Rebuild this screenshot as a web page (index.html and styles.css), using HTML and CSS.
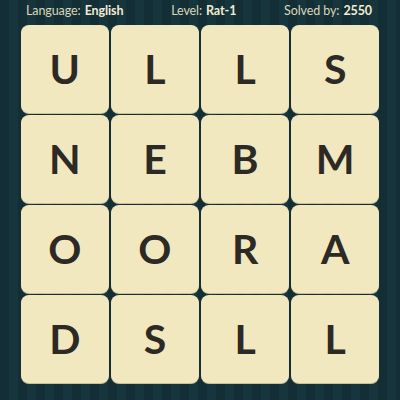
FILE: index.html
```html
<!DOCTYPE html>
<html>
<head>
<meta charset="utf-8">
<link rel="stylesheet" href="styles.css">
</head>
<body>
<div class="page">
  <div class="header">
    <span class="info">Language: <b>English</b></span>
    <span class="info">Level: <b>Rat-1</b></span>
    <span class="info">Solved by: <b>2550</b></span>
  </div>
  <div class="board">
    <div class="tile">U</div><div class="tile">L</div><div class="tile">L</div><div class="tile">S</div>
    <div class="tile">N</div><div class="tile">E</div><div class="tile">B</div><div class="tile">M</div>
    <div class="tile">O</div><div class="tile">O</div><div class="tile">R</div><div class="tile">A</div>
    <div class="tile">D</div><div class="tile">S</div><div class="tile">L</div><div class="tile">L</div>
  </div>
</div>
</body>
</html>
```
FILE: styles.css
```css
html, body {
  margin: 0;
  padding: 0;
}
body {
  width: 400px;
  height: 400px;
  overflow: hidden;
  background-color: #153139;
  background-image: repeating-linear-gradient(90deg, #142e35 0px, #142e35 9px, #17353d 9px, #17353d 18px);
  font-family: Lato, "Open Sans", sans-serif;
}
.page {
  display: flex;
  flex-direction: column;
}
.header {
  height: 25px;
  display: flex;
  justify-content: space-between;
  align-items: center;
  padding: 0 28px 2px 26px;
  color: #d9d6b9;
  font-size: 12.5px;
  letter-spacing: -0.1px;
  line-height: 1;
  box-sizing: border-box;
}
.info b {
  font-weight: 700;
  color: #f1ecd2;
  margin-left: 1px;
}
.board {
  margin-left: 21px;
  width: 358px;
  display: grid;
  grid-template-columns: repeat(4, 1fr);
  grid-auto-rows: 87.5px;
  gap: 2.5px;
}
.tile {
  background: #f1e8c0;
  border-radius: 8px;
  box-shadow: 0 1px 0 #c9bf95;
  display: flex;
  align-items: center;
  justify-content: center;
  color: #2d2925;
  font-family: Lato, sans-serif;
  font-weight: 700;
  font-size: 41px;
  line-height: 1;
}
```
